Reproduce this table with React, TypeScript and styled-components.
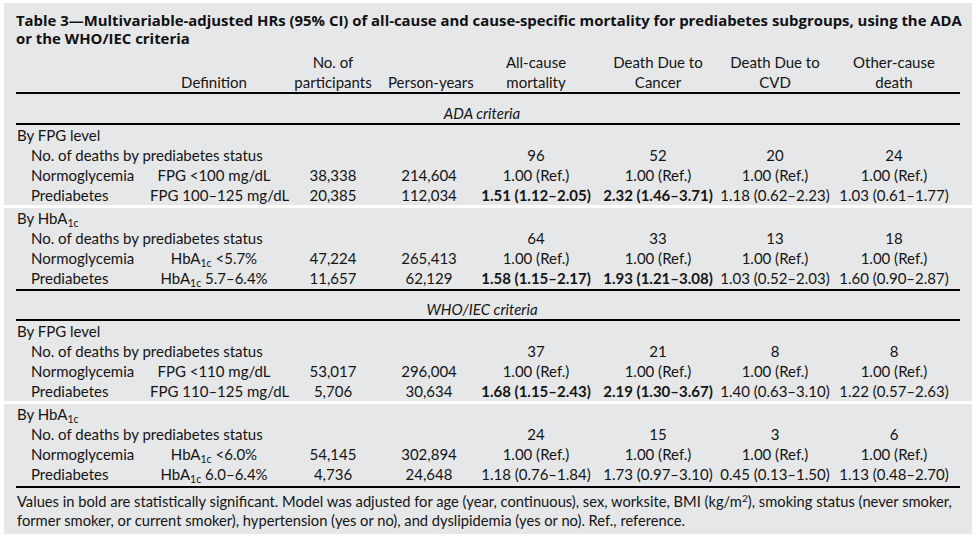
import React from "react";
import styled, { createGlobalStyle } from "styled-components";

const GlobalStyle = createGlobalStyle`
  body {
    margin: 0;
    background: #ffffff;
    font-family: Lato, "Open Sans", sans-serif;
    color: #141414;
  }
`;

type HR = { text: string; bold?: boolean };
type Group = {
  title: React.ReactNode;
  counts: string[];
  normDef: React.ReactNode;
  normN: string;
  normPy: string;
  preDef: React.ReactNode;
  preN: string;
  prePy: string;
  hr: HR[];
};

const HbA1c = () => (
  <>
    HbA<Sub>1c</Sub>
  </>
);

const groups: Group[] = [
  {
    title: "By FPG level",
    counts: ["96", "52", "20", "24"],
    normDef: <>FPG &lt;100 mg/dL</>,
    normN: "38,338",
    normPy: "214,604",
    preDef: "FPG 100–125 mg/dL",
    preN: "20,385",
    prePy: "112,034",
    hr: [
      { text: "1.51 (1.12–2.05)", bold: true },
      { text: "2.32 (1.46–3.71)", bold: true },
      { text: "1.18 (0.62–2.23)" },
      { text: "1.03 (0.61–1.77)" },
    ],
  },
  {
    title: (
      <>
        By <HbA1c />
      </>
    ),
    counts: ["64", "33", "13", "18"],
    normDef: (
      <>
        <HbA1c /> &lt;5.7%
      </>
    ),
    normN: "47,224",
    normPy: "265,413",
    preDef: (
      <>
        <HbA1c /> 5.7–6.4%
      </>
    ),
    preN: "11,657",
    prePy: "62,129",
    hr: [
      { text: "1.58 (1.15–2.17)", bold: true },
      { text: "1.93 (1.21–3.08)", bold: true },
      { text: "1.03 (0.52–2.03)" },
      { text: "1.60 (0.90–2.87)" },
    ],
  },
  {
    title: "By FPG level",
    counts: ["37", "21", "8", "8"],
    normDef: <>FPG &lt;110 mg/dL</>,
    normN: "53,017",
    normPy: "296,004",
    preDef: "FPG 110–125 mg/dL",
    preN: "5,706",
    prePy: "30,634",
    hr: [
      { text: "1.68 (1.15–2.43)", bold: true },
      { text: "2.19 (1.30–3.67)", bold: true },
      { text: "1.40 (0.63–3.10)" },
      { text: "1.22 (0.57–2.63)" },
    ],
  },
  {
    title: (
      <>
        By <HbA1c />
      </>
    ),
    counts: ["24", "15", "3", "6"],
    normDef: (
      <>
        <HbA1c /> &lt;6.0%
      </>
    ),
    normN: "54,145",
    normPy: "302,894",
    preDef: (
      <>
        <HbA1c /> 6.0–6.4%
      </>
    ),
    preN: "4,736",
    prePy: "24,648",
    hr: [
      { text: "1.18 (0.76–1.84)" },
      { text: "1.73 (0.97–3.10)" },
      { text: "0.45 (0.13–1.50)" },
      { text: "1.13 (0.48–2.70)" },
    ],
  },
];

const GroupRows: React.FC<{ group: Group }> = ({ group }) => (
  <>
    <Row>
      <Label $span={8}>{group.title}</Label>
    </Row>
    <Row>
      <Label $indent $span={4}>
        No. of deaths by prediabetes status
      </Label>
      {group.counts.map((c, i) => (
        <Cell key={i}>{c}</Cell>
      ))}
    </Row>
    <Row>
      <Label $indent>Normoglycemia</Label>
      <Cell>{group.normDef}</Cell>
      <Cell>{group.normN}</Cell>
      <Cell>{group.normPy}</Cell>
      {group.counts.map((_, i) => (
        <Cell key={i}>1.00 (Ref.)</Cell>
      ))}
    </Row>
    <Row>
      <Label $indent>Prediabetes</Label>
      <Cell>{group.preDef}</Cell>
      <Cell>{group.preN}</Cell>
      <Cell>{group.prePy}</Cell>
      {group.hr.map((h, i) => (
        <Cell key={i} $bold={h.bold}>
          {h.text}
        </Cell>
      ))}
    </Row>
  </>
);

export default function App() {
  return (
    <>
      <GlobalStyle />
      <Panel>
        <Block>
          <Title>
            Table 3—Multivariable-adjusted HRs (95% CI) of all-cause and
            cause-specific mortality for prediabetes subgroups, using the ADA
            <br />
            or the WHO/IEC criteria
          </Title>
          <HeadGrid>
            <HeadCell />
            <HeadCell>Definition</HeadCell>
            <HeadCell>
              No. of
              <br />
              participants
            </HeadCell>
            <HeadCell>Person-years</HeadCell>
            <HeadCell>
              All-cause
              <br />
              mortality
            </HeadCell>
            <HeadCell>
              Death Due to
              <br />
              Cancer
            </HeadCell>
            <HeadCell>
              Death Due to
              <br />
              CVD
            </HeadCell>
            <HeadCell>
              Other-cause
              <br />
              death
            </HeadCell>
          </HeadGrid>
          <Rule />
          <Criteria $top={9}>ADA criteria</Criteria>
          <Rule />
          <GroupRows group={groups[0]} />
        </Block>
        <Block>
          <GroupRows group={groups[1]} />
          <Rule $top={1} />
          <Criteria $top={8}>WHO/IEC criteria</Criteria>
          <Rule />
          <GroupRows group={groups[2]} />
        </Block>
        <Block>
          <GroupRows group={groups[3]} />
          <Rule $top={2} />
          <Footnote>
            Values in bold are statistically significant. Model was adjusted
            for age (year, continuous), sex, worksite, BMI (kg/m<Sup>2</Sup>),
            smoking status (never smoker,
            <br />
            former smoker, or current smoker), hypertension (yes or no), and
            dyslipidemia (yes or no). Ref., reference.
          </Footnote>
        </Block>
      </Panel>
    </>
  );
}

const Panel = styled.div`
  margin: 3px 0 0 4px;
  width: 968px;
  display: flex;
  flex-direction: column;
  gap: 3px;
  background: #ffffff;
`;

const Block = styled.div`
  background: #e6e7e9;
  padding: 0 12px;
`;

const Title = styled.h1`
  margin: 0;
  padding-top: 8px;
  font-family: "Open Sans", Lato, sans-serif;
  font-size: 14.9px;
  line-height: 18px;
  font-weight: 700;
  color: #111;
  letter-spacing: 0;
  white-space: nowrap;
`;

const columns = "134px 128px 110px 82px 132px 112px 122px 116px";

const HeadGrid = styled.div`
  display: grid;
  grid-template-columns: ${columns};
  align-items: end;
  margin-top: 5px;
  font-size: 15px;
  line-height: 20px;
`;

const HeadCell = styled.div`
  text-align: center;
  white-space: nowrap;
`;

const Rule = styled.div<{ $top?: number }>`
  height: 2px;
  margin-top: ${(p) => p.$top ?? 0}px;
  background: #000;
`;

const Criteria = styled.div<{ $top: number }>`
  padding: ${(p) => p.$top}px 12px 0 0;
  text-align: center;
  font-style: italic;
  font-size: 15px;
  line-height: 20px;
`;

const Row = styled.div`
  display: grid;
  grid-template-columns: ${columns};
  font-size: 15px;
  line-height: 20px;
  height: 20px;
`;

const Label = styled.div<{ $indent?: boolean; $span?: number }>`
  grid-column: span ${(p) => p.$span ?? 1};
  padding-left: ${(p) => (p.$indent ? 15 : 1)}px;
  white-space: nowrap;
`;

const Cell = styled.div<{ $bold?: boolean }>`
  text-align: center;
  white-space: nowrap;
  font-weight: ${(p) => (p.$bold ? 700 : 400)};
`;

const Sub = styled.sub`
  font-size: 0.7em;
  line-height: 0;
  vertical-align: -0.3em;
`;

const Sup = styled.sup`
  font-size: 0.7em;
  line-height: 0;
  vertical-align: 0.45em;
`;

const Footnote = styled.p`
  margin: 0;
  padding: 4px 0 4px 1px;
  font-size: 14.7px;
  line-height: 19px;
  white-space: nowrap;
`;
